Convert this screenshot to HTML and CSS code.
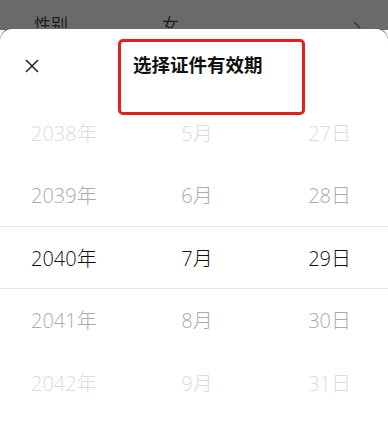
FILE: index.html
```html
<!DOCTYPE html>
<html lang="zh-CN">
<head>
<meta charset="utf-8">
<title>选择证件有效期</title>
<link rel="stylesheet" href="styles.css">
</head>
<body>
<div class="backdrop">
  <span class="bd-label">性别</span>
  <span class="bd-value">女</span>
  <svg class="bd-chevron" width="14" height="24" viewBox="0 0 14 24"><polyline points="2,10 10,18 2,26" fill="none" stroke="#3a3a3a" stroke-width="1.6"/></svg>
</div>
<div class="sheet">
  <div class="header">
    <svg class="close" width="14" height="14" viewBox="0 0 14 14"><path d="M1 1 L13 13 M13 1 L1 13" stroke="#222" stroke-width="1.5" fill="none"/></svg>
    <h1 class="title">选择证件有效期</h1>
  </div>
  <div class="picker">
    <div class="row far"><span class="y">2038年</span><span class="m">5月</span><span class="d">27日</span></div>
    <div class="row near"><span class="y">2039年</span><span class="m">6月</span><span class="d">28日</span></div>
    <div class="row sel"><span class="y">2040年</span><span class="m">7月</span><span class="d">29日</span></div>
    <div class="row near"><span class="y">2041年</span><span class="m">8月</span><span class="d">30日</span></div>
    <div class="row far"><span class="y">2042年</span><span class="m">9月</span><span class="d">31日</span></div>
  </div>
  <div class="annot"></div>
</div>
</body>
</html>
```
FILE: styles.css
```css
html, body {
  margin: 0;
  padding: 0;
}
body {
  width: 388px;
  height: 421px;
  overflow: hidden;
  background: #fff;
  font-family: "Noto Sans CJK SC", "Noto Sans", sans-serif;
}
.backdrop {
  height: 30px;
  background: #6a6a6a;
  overflow: hidden;
  display: flex;
  align-items: flex-start;
  padding-top: 12px;
  box-sizing: border-box;
  position: relative;
}
.bd-label {
  margin-left: 34px;
  font-size: 17px;
  line-height: 24px;
  color: #1e1e1e;
}
.bd-value {
  margin-left: 94px;
  font-size: 17px;
  line-height: 24px;
  color: #1e1e1e;
}
.bd-chevron {
  margin-left: auto;
  margin-right: 22px;
}
.sheet {
  position: relative;
  background: #fff;
  border-radius: 12px 12px 0 0;
  margin-top: -1px;
  box-shadow: 0 -1px 0 #6a6a6a;
}
.header {
  height: 72px;
  display: flex;
  align-items: center;
}
.close {
  margin-left: 25px;
  margin-top: 2px;
}
.title {
  margin: 0 0 0 94px;
  padding-bottom: 3px;
  font-size: 18.5px;
  line-height: 24px;
  font-weight: 700;
  color: #111;
}
.picker {
  display: flex;
  flex-direction: column;
}
.row {
  height: 62.5px;
  display: grid;
  grid-template-columns: 1fr 1fr 1fr;
  align-items: center;
  padding: 0 37px 0 31px;
  font-family: "Open Sans", "Noto Sans CJK SC", sans-serif;
  font-size: 20px;
  font-weight: 300;
  box-sizing: border-box;
}
.row .y { justify-self: start; }
.row .m { justify-self: center; padding-left: 12px; }
.row .d { justify-self: end; }
.far { color: #dcdcdc; }
.near { color: #ababab; }
.sel {
  color: #111;
  border-top: 1px solid #e6e6e6;
  border-bottom: 1px solid #e6e6e6;
}
.annot {
  position: absolute;
  left: 118px;
  top: 10px;
  width: 187px;
  height: 76px;
  border: 3px solid #e4201d;
  border-radius: 5px;
  box-sizing: border-box;
}
```
